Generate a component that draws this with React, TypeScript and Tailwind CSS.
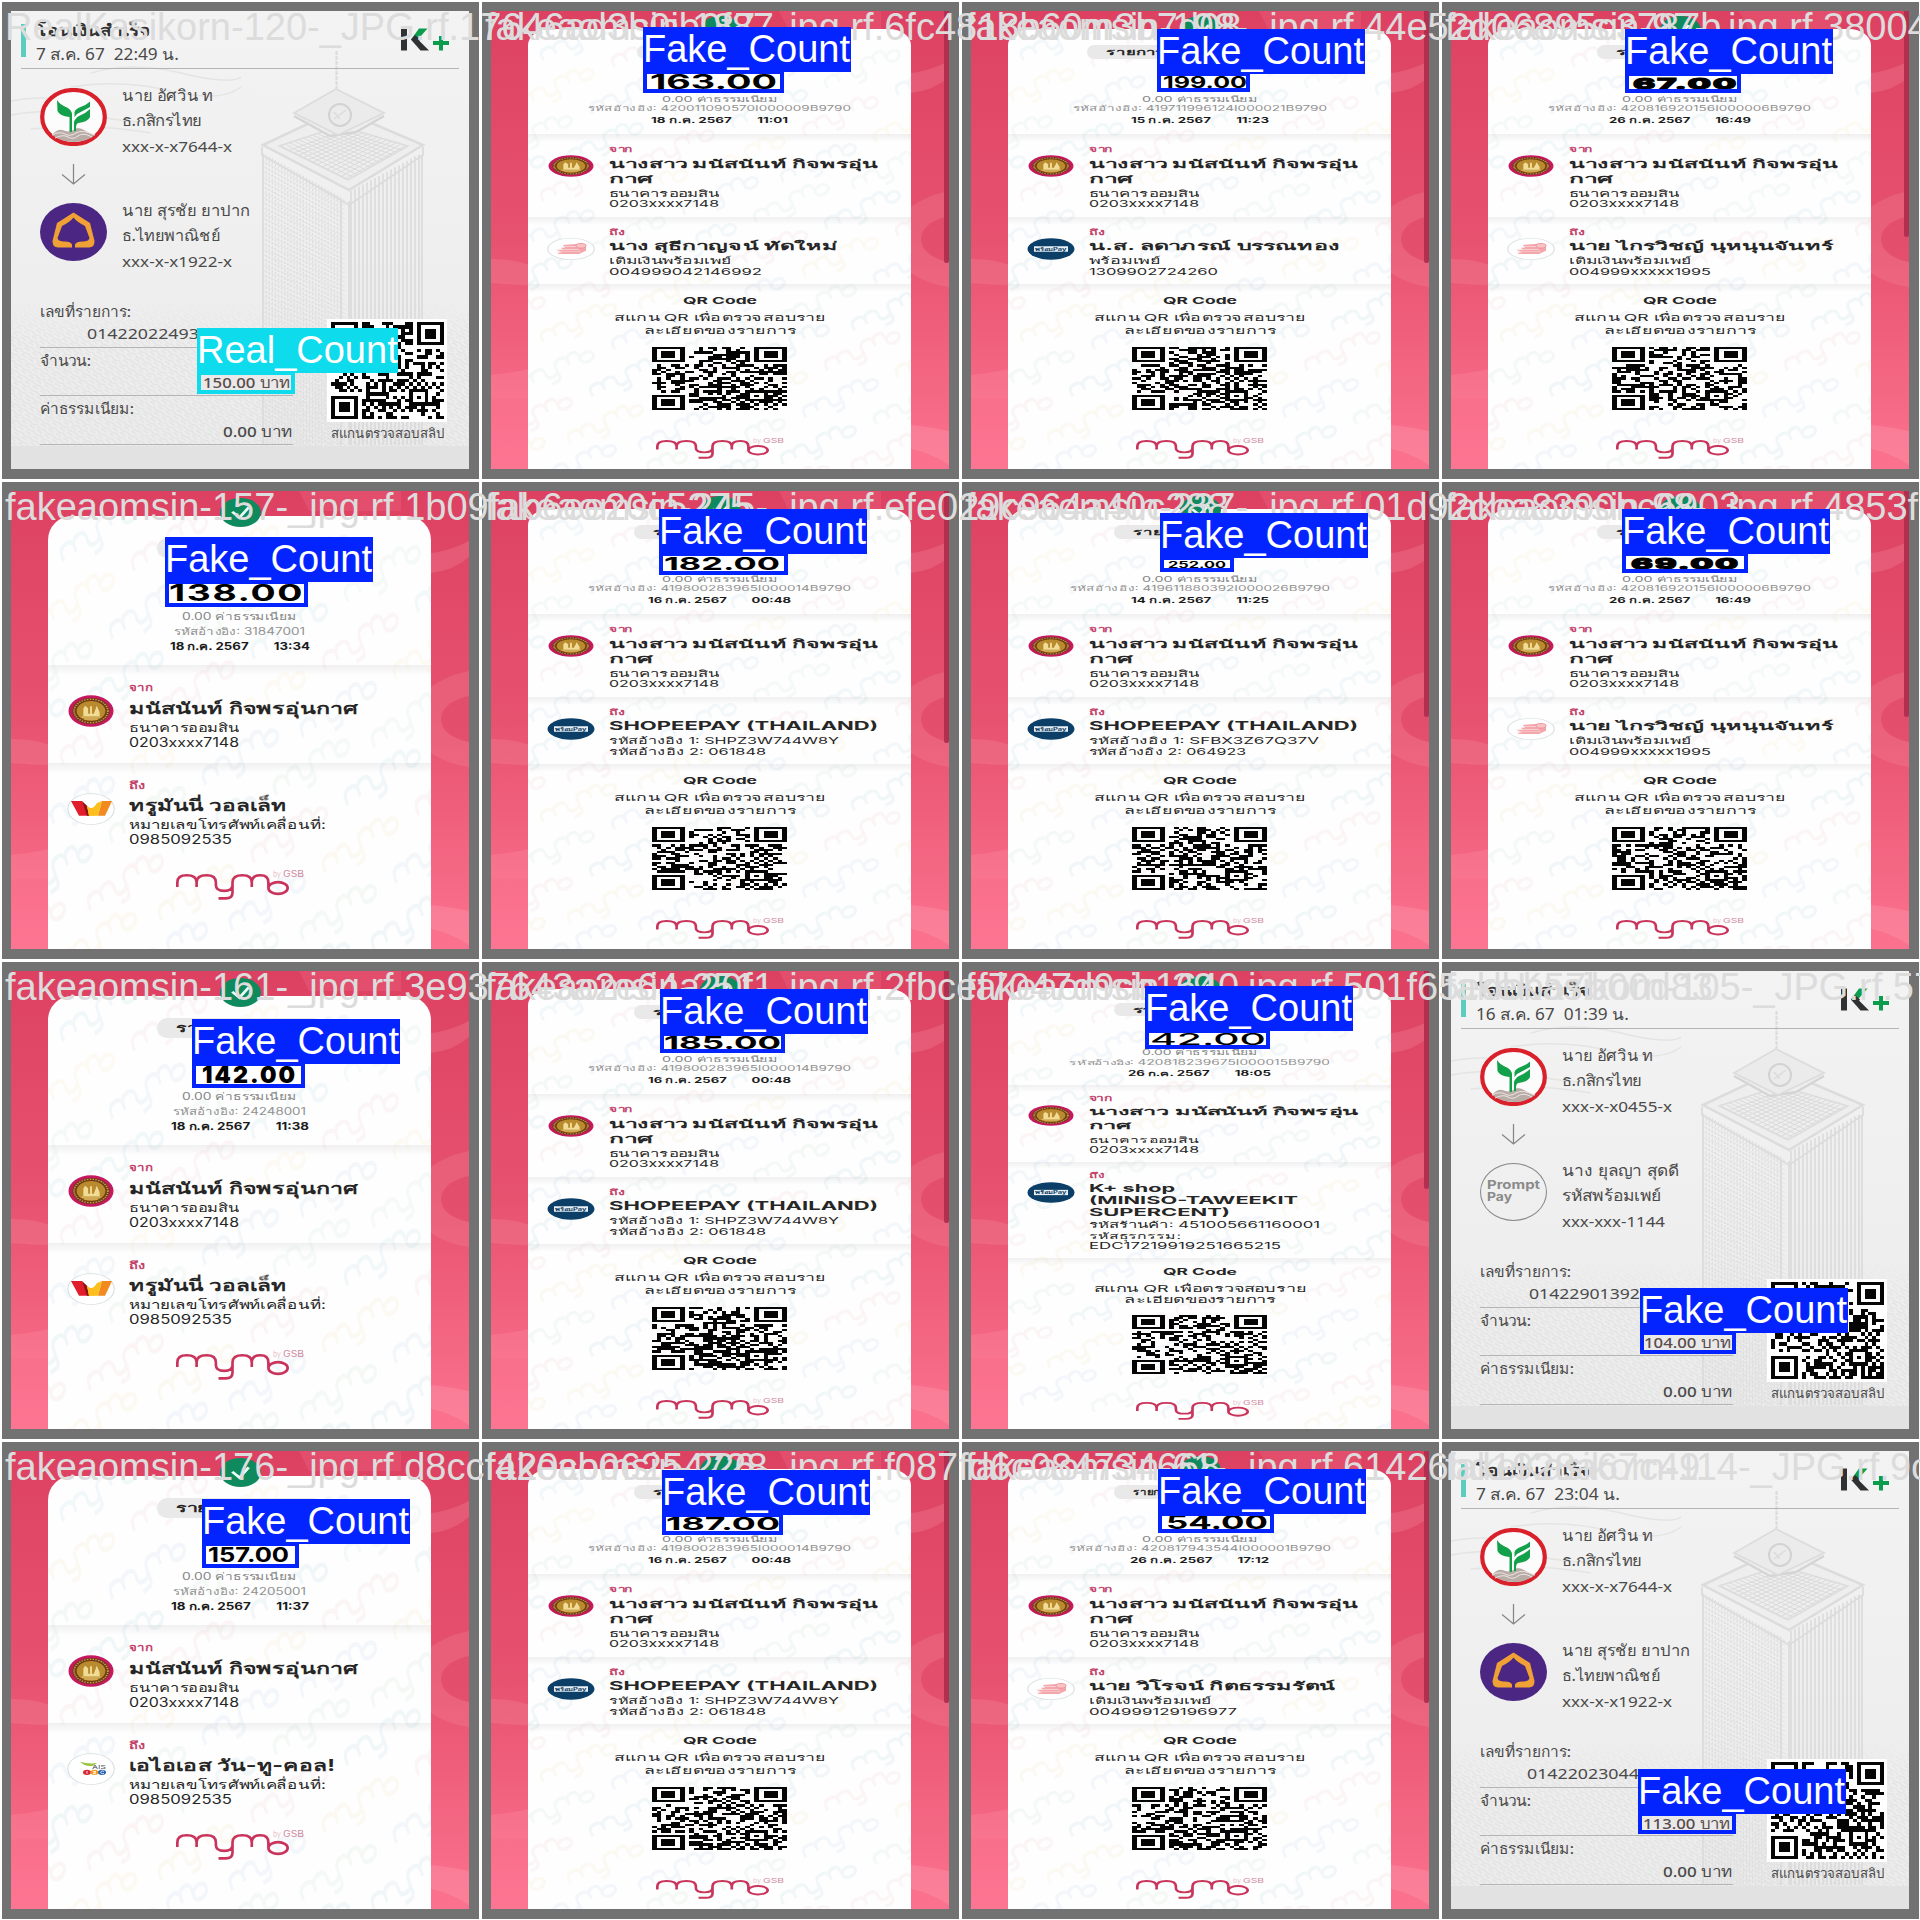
import { useLayoutEffect, useRef, type ReactNode } from "react";

/* Single line of text stretched horizontally to fill the width of its box. */
function Fit({ className = "", children }: { className?: string; children: ReactNode }) {
  const box = useRef<HTMLDivElement>(null);
  const txt = useRef<HTMLSpanElement>(null);
  useLayoutEffect(() => {
    if (!box.current || !txt.current) return;
    txt.current.style.transform = "none";
    const natural = txt.current.getBoundingClientRect().width;
    const target = box.current.getBoundingClientRect().width;
    if (natural > 0) txt.current.style.transform = `scaleX(${target / natural})`;
  });
  return (
    <div ref={box} className={`flex shrink-0 items-center whitespace-pre leading-none ${className}`}>
      <span ref={txt} className="inline-block shrink-0 origin-left">
        {children}
      </span>
    </div>
  );
}

/* ---------- QR ---------- */
function QR({ seed, className }: { seed: number; className: string }) {
  const n = 29;
  let s = seed * 7919 + 13;
  const rnd = () => {
    s = (s * 1103515245 + 12345) % 2147483648;
    return s / 2147483648;
  };
  const finder = (x: number, y: number) => {
    const d = Math.max(Math.abs(x - 3), Math.abs(y - 3));
    return d !== 2 && d < 4;
  };
  let d = "";
  for (let y = 0; y < n; y++) {
    for (let x = 0; x < n; x++) {
      let on = rnd() > 0.5;
      if (x > 15 && y > 12 && rnd() > 0.55) on = (x + y) % 2 === 0;
      if (x < 8 && y < 8) on = x < 7 && y < 7 && finder(x, y);
      else if (x > n - 9 && y < 8) on = x > n - 8 && y < 7 && finder(x - (n - 7), y);
      else if (x < 8 && y > n - 9) on = x < 7 && y > n - 8 && finder(x, y - (n - 7));
      else if (Math.abs(x - 22) < 3 && Math.abs(y - 22) < 3)
        on = Math.max(Math.abs(x - 22), Math.abs(y - 22)) !== 1;
      if (on) d += `M${x} ${y}h1v1h-1z`;
    }
  }
  return (
    <svg viewBox="0 0 29 29" preserveAspectRatio="none" shapeRendering="crispEdges" className={className}>
      <path d={d} fill="#050505" />
    </svg>
  );
}

/* ---------- MyMo brand strokes ---------- */
const MYMO =
  "M4 40V26Q4 4 32 4Q62 4 62 26V40M62 26Q62 4 92 4Q120 4 120 26V34Q120 52 145 52Q170 52 170 34V58Q170 75 150 75H128M170 34V26Q170 4 200 4Q228 4 228 26V40M228 26Q228 4 254 4Q278 4 278 26V40M278 43a29 18 0 1 0 58 0a29 18 0 1 0 -58 0";

function Watermark({ h }: { h: number }) {
  const tints = ["#8fc4d0", "#eab0bc", "#ecd79c", "#a3bedb", "#a9d3c0"];
  const items = [];
  for (let r = 0; r < 10; r++)
    for (let c = -1; c < 7; c++)
      items.push(
        <path
          key={`${r}_${c}`}
          d={MYMO}
          fill="none"
          stroke={tints[(r * 2 + c + 5) % 5]}
          strokeWidth={12}
          transform={`translate(${c * 71 - (r % 3) * 22 + 10} ${r * 47 + c * 7 + 22}) rotate(-27) scale(0.24 0.27)`}
        />,
      );
  return (
    <svg
      viewBox={`0 0 383 ${h}`}
      preserveAspectRatio="none"
      className="absolute inset-0 h-full w-full opacity-[0.11]"
    >
      {items}
    </svg>
  );
}

function Waves() {
  return (
    <svg viewBox="0 0 458 458" className="absolute inset-0 h-full w-full">
      <path d="M288 0q6 12 10 20H390V0z" fill="#ee6a86" opacity=".3" />
      <path d="M420 82q22-2 38-16V50q-20 10-38 12z" fill="#f58aa0" opacity=".3" />
      <path d="M458 180q-22 4-38 16v66q18 12 38 14z" fill="#f58aa0" opacity=".25" />
      <path d="M458 205q-26 6-28 22q0 18 28 24z" fill="#dd3f60" opacity=".55" />
      <path d="M0 248q24 0 38 6v20q-18 0-38-2z" fill="#f58aa0" opacity=".3" />
      <path d="M0 364q20-2 38-6v30H0z" fill="#ff8ea5" opacity=".3" />
      <path d="M0 388h38v70H0z" fill="#ff7c97" opacity=".35" />
      <path d="M420 414q20 2 38 6v34q-18-12-38-16z" fill="#ff9aae" opacity=".35" />
    </svg>
  );
}

/* ---------- Small round logos ---------- */
function GsbSeal({ className }: { className: string }) {
  return (
    <svg viewBox="0 0 48 48" preserveAspectRatio="none" className={className}>
      <circle cx="24" cy="24" r="23.5" fill="#c4195f" />
      <circle cx="24" cy="24" r="19.5" fill="#6d3a12" />
      <circle cx="24" cy="24" r="17.6" fill="none" stroke="#c59a4e" strokeWidth="2" strokeDasharray="1.6 1.4" />
      <circle cx="24" cy="24" r="15" fill="#b98a2e" />
      <path d="M16 32V20l2-4 3 4v8h2V17h2v11h2l3-12 3 10v6z" fill="#f1dc95" />
      <path d="M14 33h20M17 36h14" stroke="#e5c878" strokeWidth="1.6" />
    </svg>
  );
}

function DestLogo({ kind, className }: { kind: string; className: string }) {
  if (kind === "bank")
    return (
      <svg viewBox="0 0 48 48" preserveAspectRatio="none" className={className}>
        <circle cx="24" cy="24" r="23.5" fill="#0b3f68" />
        <rect x="7" y="18" width="34" height="12" fill="#e8f1f7" />
        <text x="24" y="28" textAnchor="middle" fontSize="10.5" fontWeight="700" textLength="31" lengthAdjust="spacingAndGlyphs" fill="#123f63" fontFamily="Inter, sans-serif">
          พร้อมPay
        </text>
      </svg>
    );
  return (
    <svg viewBox="0 0 48 48" preserveAspectRatio="none" className={className}>
      <circle cx="24" cy="24" r="23.2" fill="#fff" stroke="#d5dee1" strokeWidth="1.1" />
      {kind === "topup" && (
        <g>
          <path d="M16 15l19-3 4 3v13l-7 7H12l-2-3h5l-4-3h4l-6-3h7l-2-5h4z" fill="#f3a6ac" />
          <path d="M16 19h20M10 25h22M14 30h20" stroke="#fbdcdc" strokeWidth="1.5" />
          <circle cx="34" cy="17" r="5" fill="#f8c3c4" stroke="#e9878f" />
        </g>
      )}
      {kind === "true" && (
        <g>
          <path d="M4 12h11l7 22H12z" fill="#e11d2b" />
          <path d="M15 12l5 7 3 15h-3z" fill="#8c1117" />
          <path d="M20 19l8 15h-6z" fill="#ffd028" />
          <path d="M22 34l-2-15q5 9 10-4l5-3-4 22z" fill="#fbc01d" />
          <path d="M31 34l4-22h10l-7 22z" fill="#f28a1d" />
        </g>
      )}
      {kind === "ais" && (
        <g>
          <path d="M13 13q9 4 17 2l-4 4q-8 2-13-6z" fill="#9bc53d" />
          <text x="25" y="24" fontSize="8" textLength="14" lengthAdjust="spacingAndGlyphs" fill="#4b5563" fontFamily="Inter, sans-serif">AIS</text>
          <circle cx="20" cy="29" r="4" fill="#d62839" />
          <circle cx="27.500" cy="29" r="4" fill="#f39a1f" />
          <circle cx="35" cy="29" r="4" fill="#2563b0" />
          <path d="M20 27v4M26 28h3l-3 3h3M37 27.500a2 2 0 1 0 0 3" stroke="#fff" fill="none" strokeWidth="1" />
        </g>
      )}
    </svg>
  );
}

/* ---------- MyMo slip ---------- */
type Row = { t: string; w: string };
type Mymo = {
  type: "mymo";
  v: "A" | "B" | "C";
  pill?: string;
  pillW?: string;
  pillT?: string;
  ref_: Row;
  date: Row;
  logo: string;
  dest: Row[];
  subs: Row[];
  bar?: string;
  seed: number;
};

const V = {
  A: {
    card: "mt-[18px] rounded-t-[22px_16px]", h: 440,
    check: "top-[5px] h-[28px]",
    pill: "mt-[16px] h-[14px] text-[8.5px]", fee: "mt-[35px] h-[10px] text-[8px]", ref: "h-[10px] text-[7.5px]",
    date: "h-[14px] text-[7.5px]", div1: "mt-[6px] h-[8px]", from: "mt-[2px] h-[10px] text-[8px]",
    name: "h-[21px] text-[11.5px]", name2: "h-[9px] text-[11.5px]", bank: "mt-[4px] h-[10px] text-[9px]",
    acct: "h-[11px] text-[9.5px]", div2: "mt-[8px] h-[8px]", dest: "h-[19px] text-[11.5px]",
    subs: ["h-[9px] text-[9.5px]", "h-[13px] text-[9.5px]"], div3: "mt-[6px] h-[8px]",
    icon: "mt-[13px] h-[22px]",
    qt: "mt-[3px] h-[12px] text-[9.5px]", s1: "mt-[3px] h-[16px] text-[9.5px]", s2: "h-[9px] text-[9.5px]",
    qr: "mt-[12px] h-[63px]", logo: "mt-[30px] h-[19px]", gsb: "text-[6.5px] -top-[2px]",
  },
  B: {
    card: "mt-[25px] rounded-t-[24px_24px]", h: 300,
    check: "top-[7px] h-[29px]",
    pill: "mt-[22px] h-[20px] text-[11px]", fee: "mt-[52px] h-[12px] text-[10px]", ref: "h-[17px] text-[10px]",
    date: "h-[17px] text-[10.5px]", div1: "mt-[9px] h-[10px]", from: "mt-[6px] h-[12px] text-[10px]",
    name: "h-[29px] text-[16px]", name2: "hidden", bank: "mt-[1px] h-[10px] text-[12px]",
    acct: "h-[20px] text-[12.5px]", div2: "mt-[10px] h-[10px]", dest: "h-[28px] text-[16px]",
    subs: ["h-[13px] text-[12.5px]", "h-[17px] text-[12.5px]"], div3: "hidden",
    icon: "mt-[20px] h-[32px]",
    qt: "", s1: "", s2: "", qr: "", logo: "mt-[25px] h-[26px]", gsb: "text-[8.5px] -top-[4px]",
  },
  C: {
    card: "mt-[17px] rounded-t-[22px_15px]", h: 480,
    check: "top-[5px] h-[26px]",
    pill: "mt-[15px] h-[13px] text-[8px]", fee: "mt-[32px] h-[10px] text-[7.5px]", ref: "h-[8px] text-[7px]",
    date: "h-[14px] text-[7px]", div1: "mt-[5px] h-[7px]", from: "mt-[2px] h-[10px] text-[7.5px]",
    name: "h-[17px] text-[10.5px]", name2: "h-[11px] text-[10.5px]", bank: "mt-[3px] h-[10px] text-[8.5px]",
    acct: "h-[9px] text-[9px]", div2: "mt-[8px] h-[7px]", dest: "translate-y-[1.5px] h-[12px] text-[10.8px]",
    subs: ["h-[15px] text-[9px]", "h-[9px] text-[8.5px]", "h-[10px] text-[8.5px]"], div3: "mt-[7px] h-[7px]",
    icon: "mt-[13px] h-[21px]",
    qt: "mt-[1px] h-[10px] text-[9px]", s1: "mt-[5px] h-[14px] text-[9px]", s2: "h-[9px] text-[9px]",
    qr: "mt-[11px] h-[59px]", logo: "mt-[28px] h-[18px]", gsb: "text-[6px] -top-[2px]",
  },
};

function Divider({ className }: { className: string }) {
  return <div className={`w-full shrink-0 bg-linear-to-b from-[#f0f0f0] to-[#fefefe] ${className}`} />;
}

function MymoSlip({ s }: { s: Mymo }) {
  const v = V[s.v];
  const short = s.v === "B";
  return (
    <div className="relative flex h-full w-full overflow-hidden bg-linear-to-b from-[#dd4162] via-[#e7526f] to-[#fb728f] font-[Inter,'Noto_Sans',sans-serif]">
      <Waves />
      <div className={`relative ml-[37px] flex w-[383px] flex-col items-center overflow-hidden bg-[#fefefe] text-[#262626] ${v.card}`}>
        <Watermark h={v.h} />
        <div className={`relative flex shrink-0 items-center rounded-full bg-[#e9e9e9] font-semibold ${v.pill} ${s.pillW ?? "w-[166px]"}`}>
          {s.pill && <Fit className={`ml-[19px] ${s.pillT ?? "w-[128px]"}`}>{s.pill}</Fit>}
        </div>
        <Fit className={`relative w-[115px] text-[#858585] ${v.fee}`}>0.00 ค่าธรรมเนียม</Fit>
        <Fit className={`relative text-[#929292] ${v.ref} ${s.ref_.w}`}>{s.ref_.t}</Fit>
        <Fit className={`relative font-bold text-[#1b1b1b] ${v.date} ${s.date.w}`}>{s.date.t}</Fit>
        <Divider className={v.div1} />
        <div className="relative flex w-full shrink-0">
          <GsbSeal className={`ml-[20px] w-[46px] shrink-0 ${v.icon}`} />
          <div className="ml-[15px] flex flex-col">
            <Fit className={`w-[24px] font-semibold text-[#c2426a] ${v.from}`}>จาก</Fit>
            {short ? (
              <Fit className={`w-[229px] font-bold ${v.name}`}>มนัสนันท์ กิจพรอุ่นกาศ</Fit>
            ) : (
              <>
                <Fit className={`w-[269px] font-bold ${v.name}`}>นางสาว มนัสนันท์ กิจพรอุ่น</Fit>
                <Fit className={`w-[43px] font-bold ${v.name2}`}>กาศ</Fit>
              </>
            )}
            <Fit className={`w-[110px] ${v.bank}`}>ธนาคารออมสิน</Fit>
            <Fit className={`w-[110px] ${v.acct}`}>0203xxxx7148</Fit>
          </div>
        </div>
        <Divider className={v.div2} />
        <div className="relative flex w-full shrink-0">
          <DestLogo kind={s.logo} className={`ml-[19px] w-[48px] shrink-0 ${v.icon}`} />
          <div className="ml-[14px] flex flex-col">
            <Fit className={`w-[16px] font-semibold text-[#c2426a] ${v.from}`}>ถึง</Fit>
            {s.dest.map((d) => (
              <Fit key={d.t} className={`font-bold ${v.dest} ${d.w}`}>{d.t}</Fit>
            ))}
            {s.subs.map((d, i) => (
              <Fit key={d.t} className={`${v.subs[i]} ${d.w}`}>{d.t}</Fit>
            ))}
          </div>
        </div>
        {!short && (
          <>
            <Divider className={v.div3} />
            <Fit className={`relative w-[74px] font-bold ${v.qt}`}>QR Code</Fit>
            <Fit className={`relative w-[212px] ${v.s1}`}>สแกน QR เพื่อตรวจสอบราย</Fit>
            <Fit className={`relative w-[152px] ${v.s2}`}>ละเอียดของรายการ</Fit>
            <QR seed={s.seed} className={`relative w-[135px] shrink-0 ${v.qr}`} />
          </>
        )}
        <div className={`relative mr-[15px] w-[113px] shrink-0 ${v.logo}`}>
          <svg viewBox="0 0 340 80" preserveAspectRatio="none" className="h-full w-full">
            <path d={MYMO} fill="none" stroke="#c9345c" strokeWidth="8" />
          </svg>
          <div className={`absolute left-[97px] flex leading-none text-[#cf8ba0] ${v.gsb}`}>
            <Fit className="w-[8px] opacity-50">by</Fit>
            <Fit className="ml-[2px] w-[21px]">GSB</Fit>
          </div>
        </div>
      </div>
      <svg viewBox="0 0 40 40" preserveAspectRatio="none" className={`absolute left-[209px] w-[41px] ${v.check}`}>
        <circle cx="20" cy="20" r="20" fill="#0f8a5f" />
        <path d="M12 19l7 8 9-14" fill="none" stroke="#e9fff6" strokeWidth="3" />
      </svg>
      {s.bar && <div className={`absolute right-0 top-0 w-[5px] rounded-b bg-[#b42f4f] ${s.bar}`} />}
    </div>
  );
}

/* ---------- Kasikorn slip ---------- */
type Kplus = {
  type: "kplus";
  date: Row;
  acct: string;
  prompt?: boolean;
  to: Row[];
  no: Row;
  noM: string;
  seed: number;
};

function Tower() {
  const left = [];
  for (let i = 0; i < 26; i++) left.push(`M${252 + i * 3.1} ${142 + i * 1.75}V434`);
  const right = [];
  for (let i = 0; i < 18; i++) right.push(`M${340 + i * 4} ${180 - i * 2.15}V434`);
  const rows = [];
  for (let i = 0; i < 56; i++) rows.push(`M252 ${145 + i * 5.2}L334 ${190 + i * 4.5}`);
  const roof = [];
  for (let i = 0; i < 13; i++) {
    roof.push(`M${270 + i * 4.6} ${135 - i * 1.5}L${336 + i * 4.6} ${168 - i * 2.4}`);
    roof.push(`M${394 - i * 4.6} ${135 - i * 1.5}L${334 - i * 4.6} ${168 - i * 2.4}`);
  }
  return (
    <svg viewBox="0 0 458 458" className="absolute inset-0 h-full w-full">
      <defs>
        <pattern id="ground" width="9" height="7" patternUnits="userSpaceOnUse" patternTransform="rotate(32)">
          <path d="M0 2q3 2 6 0t3 1M1 5.500q3-1 6 .5" stroke="#dedede" strokeWidth=".9" fill="none" />
        </pattern>
        <linearGradient id="fade" x1="0" y1="0" x2="0" y2="1">
          <stop offset="0" stopColor="#eeeeee" />
          <stop offset=".3" stopColor="#eeeeee" stopOpacity="0" />
        </linearGradient>
      </defs>
      <rect y="290" width="458" height="145" fill="url(#ground)" />
      <rect y="285" width="458" height="150" fill="url(#fade)" />
      <path d="M80 62q40-12 90 0t60 4M60 76q50-8 100 4t70-4M0 104q40-8 90 2t80 0M20 118q60-6 120 4M0 90q30-6 60 0" stroke="#e4e4e4" strokeWidth="1.500" fill="none" />
      <g fill="none" stroke="#dcdcdc">
        <path d={left.join("")} strokeWidth="1.300" strokeDasharray="2.500 1.500" stroke="#dedede" />
        <path d={rows.join("")} strokeWidth=".9" stroke="#e2e2e2" />
        <path d={right.join("")} strokeWidth="1.400" stroke="#d7d7d7" />
        <path d="M325.500 40v38" strokeWidth="2.200" strokeDasharray="4 1" />
        <path d="M252 134l76-36 84 36-74 45z" strokeWidth="2.500" fill="#eeeeee" />
        <path d={roof.join("")} strokeWidth=".9" stroke="#d8d8d8" />
        <path d="M268 135l61-20 68 20-60 34z" strokeWidth="1.500" />
        <path d="M283 105l36 20 26-4 28-16" strokeWidth="2.500" stroke="#d5d5d5" fill="#eeeeee" />
        <path d="M283 102l42-24 48 24-46 22z" strokeWidth="1.800" fill="#ebebeb" />
        <circle cx="329" cy="104" r="11" strokeWidth="2" stroke="#d2d2d2" />
        <path d="M323 108l12-9M323 101l6 7" strokeWidth="1.500" />
        <path d="M251 136v8l87 50 74-50v-8M252 144v290M338 190v244M411 144v290M330 190v244" strokeWidth="1.800" />
      </g>
    </svg>
  );
}

function KplusSlip({ s }: { s: Kplus }) {
  return (
    <div className="relative flex h-full w-full flex-col overflow-hidden bg-linear-to-b from-[#f3f3f3] to-[#ebebeb] pl-[10px] font-['Noto_Sans',sans-serif] text-[#4a4a4a]">
      <Tower />
      <div className="absolute inset-x-0 bottom-0 h-[23px] bg-[#e2e2e2]" />
      <div className="relative flex h-[58px] w-[438px] shrink-0 border-b border-[#b5b5b5]">
        <div className="mt-[13px] h-[33px] w-[5px] bg-[#5ccdbd]" />
        <div className="ml-[10px] flex flex-col">
          <Fit className="mt-[10px] h-[18px] w-[114px] text-[16px] font-semibold text-[#333]">โอนเงินสำเร็จ</Fit>
          <Fit className={`mt-[7px] h-[17px] text-[15.5px] ${s.date.w}`}>{s.date.t}</Fit>
        </div>
        <svg viewBox="0 0 48 24" className="ml-auto mr-[10px] mt-[17px] h-[24px] w-[48px]">
          <path d="M0 .5h6v22H0z" fill="#2f3133" />
          <path d="M10 11.500h7l11 11h-8.500z" fill="#2f3133" />
          <path d="M10 11.500L18 0.500h8.500L16 12.500z" fill="#0c9d4c" />
          <path d="M14 7l5 4.500-4 5-5-5z" fill="#2f3133" />
          <path d="M32 15h16M40 8v14.500" stroke="#0c9d4c" strokeWidth="4" />
        </svg>
      </div>
      <div className="relative mt-[19px] flex shrink-0">
        <svg viewBox="0 0 67 58" className="ml-[19px] h-[58px] w-[67px]">
          <ellipse cx="33.500" cy="29" rx="31.300" ry="27" fill="#fcfcfc" stroke="#d9202b" strokeWidth="4.200" />
          <path d="M12 47q6-7 12-4.500t10-1 11 1 10 4.500q-8 7-21 7t-22-7z" fill="#b9aca6" />
          <path d="M12 47q8-4 13-1t11-1 19 2M15 50q8-4 13-1t10-1 14 1" stroke="#ece6e3" fill="none" />
          <path d="M17 12q3 5 10 7.500 4 2 5 6V44h-2.500V29q-10-1-12-6z" fill="#13a04a" />
          <path d="M50 13.500V19l-13 7-2.500 3v-5q1-3 6-5 6-2 9.500-5.500z" fill="#13a04a" />
          <path d="M50 21v8q-2 5-12 6-2 1-2 4v4h-2V34q1-4 6-6.500 6-2.500 10-6.500z" fill="#13a04a" />
        </svg>
        <div className="ml-[15px] flex flex-col">
          <Fit className="-mt-[1px] h-[18px] w-[91px] text-[15.5px] font-medium">นาย อัศวิน ท</Fit>
          <Fit className="mt-[7px] h-[18px] w-[80px] text-[15.5px]">ธ.กสิกรไทย</Fit>
          <Fit className="mt-[7px] h-[18px] w-[110px] text-[14.5px]">{s.acct}</Fit>
        </div>
      </div>
      <svg viewBox="0 0 24 20" className="relative ml-[40px] mt-[9px] h-[21px] w-[25px] shrink-0">
        <path d="M12 0v19M1 10l11 9 11-9" fill="none" stroke="#858585" strokeWidth="1.200" />
      </svg>
      <div className="relative mt-[18px] flex shrink-0">
        {s.prompt ? (
          <div className="ml-[19px] flex h-[58px] w-[67px] flex-col rounded-[50%] border-[1.5px] border-[#868686] pl-[6px] pt-[15px] font-[Inter,sans-serif] text-[12px] font-bold text-[#8a8a8a]">
            <Fit className="h-[12px] w-[53px]">Prompt</Fit>
            <Fit className="h-[12px] w-[25px]">Pay</Fit>
          </div>
        ) : (
          <svg viewBox="0 0 67 58" className="ml-[19px] h-[58px] w-[67px]">
            <ellipse cx="33.500" cy="29" rx="33.500" ry="29" fill="#4b2683" />
            <path d="M33.500 9.500L50 20 54.500 38Q54.500 44.500 49 44.500H18Q12.500 44.500 12.500 38L17 20z" fill="#f0a136" />
            <path d="M33.500 14.500Q37 19 45 23L49.500 35Q49 38 44 38.500 36.500 38 35 41.500V45.500H32V41.500Q30.500 38 23 38.500 18 38 17.500 35L22 23Q30 19 33.500 14.500z" fill="#4b2683" />
          </svg>
        )}
        <div className="ml-[15px] flex flex-col">
          <Fit className={`-mt-[1px] h-[18px] text-[15.5px] font-medium ${s.to[0].w}`}>{s.to[0].t}</Fit>
          <Fit className={`mt-[7px] h-[18px] text-[15.5px] ${s.to[1].w}`}>{s.to[1].t}</Fit>
          <Fit className={`mt-[7px] h-[18px] text-[14.5px] ${s.to[2].w}`}>{s.to[2].t}</Fit>
        </div>
      </div>
      <div className="relative ml-[19px] mt-[31px] flex">
        <div className="flex w-[253px] flex-col">
          <Fit className="h-[20px] w-[91px] text-[15px] font-medium">เลขที่รายการ:</Fit>
          <Fit className={`mt-[3px] h-[20px] text-[14px] ${s.noM} ${s.no.w}`}>{s.no.t}</Fit>
          <div className="mt-[3px] h-px bg-[#b5b5b5]" />
          <Fit className="mt-[3px] h-[18px] w-[51px] text-[15px] font-medium">จำนวน:</Fit>
          <div className="mt-[26px] h-px bg-[#b5b5b5]" />
          <Fit className="mt-[3px] h-[18px] w-[94px] text-[15px] font-medium">ค่าธรรมเนียม:</Fit>
          <Fit className="ml-auto mt-[4px] h-[20px] w-[70px] text-[14.5px] font-medium">0.00 บาท</Fit>
          <div className="mt-[3px] h-px bg-[#b5b5b5]" />
        </div>
        <div className="ml-[34px] mt-[18px] flex flex-col items-center">
          <div className="flex h-[103px] w-[120px] items-center justify-center bg-white">
            <QR seed={s.seed} className="h-[97px] w-[113px]" />
          </div>
          <Fit className="mt-[3px] h-[16px] w-[113px] text-[13px]">สแกนตรวจสอบสลิป</Fit>
        </div>
      </div>
    </div>
  );
}

/* ---------- Data ---------- */
type Tag = { label: string; tone: string; pos: string; box: string; amount: string; text: string };
type Tile = { file: string; slip: Mymo | Kplus; tag: Tag };

const BLUE = "bg-[#0424ff] border-[#0424ff]";
const CYAN = "bg-[#0edbec] border-[#0edbec]";
const to = (t: string, w: string): Row => ({ t, w });
const day = (d: string, t: string, w: string): Row => ({ t: `${d}        ${t}`, w });
const fake = (pos: string, box: string, amount: string, text: string): Tag => ({ label: "Fake_Count", tone: BLUE, pos, box, amount, text });

const shopee = (a: string, b: string) => ({
  logo: "bank",
  dest: [to("SHOPEEPAY (THAILAND)", "w-[269px]")],
  subs: [to(`รหัสอ้างอิง 1: ${a}`, "w-[230px]"), to(`รหัสอ้างอิง 2: ${b}`, "w-[157px]")],
});
const phone = [to("หมายเลขโทรศัพท์เคลื่อนที่:", "w-[197px]"), to("0985092535", "w-[103px]")];

const tiles: Tile[] = [
  {
    file: "RealKasikorn-120-_JPG.rf.17646ad3b0jb0f87",
    slip: { type: "kplus", date: to("7 ส.ค. 67  22:49 น.", "w-[143px]"), acct: "xxx-x-x7644-x", to: [to("นาย สุรชัย ยาปาก", "w-[128px]"), to("ธ.ไทยพาณิชย์", "w-[98px]"), to("xxx-x-x1922-x", "w-[110px]")], no: to("014220224930", "w-[122px]"), noM: "ml-[47px]", seed: 3 },
    tag: { label: "Real_Count", tone: CYAN, pos: "left-[197px] top-[328px]", box: "h-[23px] w-[98px]", amount: "150.00 บาท", text: "w-[88px] ml-[2px] text-[14.5px] font-medium text-[#5b4b4b] font-['Noto_Sans',sans-serif]" },
  },
  {
    file: "fakeaomsin-187-_jpg.rf.6fc4818b60m3b7d08",
    slip: { type: "mymo", v: "A", ref_: to("รหัสอ้างอิง: 420011090570I000009B9790", "w-[263px]"), date: day("18 ก.ค. 2567", "11:01", "w-[137px]"), logo: "topup", dest: [to("นาง สุธีกาญจน์ ทัดใหม่", "w-[229px]")], subs: [to("เติมเงินพร้อมเพย์", "w-[123px]"), to("004999042146992", "w-[153px]")], bar: "h-[252px]", seed: 11 },
    tag: fake("left-[163px] top-[27px]", "h-[23px] w-[141px]", "163.00", "w-[127px] ml-[3px] text-[20px] font-bold"),
  },
  {
    file: "fakeaomsin-198-_jpg.rf.44e52d06895c3787b",
    slip: { type: "mymo", v: "A", pill: "รายการโอนเงินพร้อมเพย์", pillW: "w-[226px]", pillT: "w-[188px]", ref_: to("รหัสอ้างอิง: 419711996124I000021B9790", "w-[254px]"), date: day("15 ก.ค. 2567", "11:23", "w-[138px]"), logo: "bank", dest: [to("น.ส. ลดาภรณ์ บรรณทอง", "w-[251px]")], subs: [to("พร้อมเพย์", "w-[72px]"), to("1309902724260", "w-[129px]")], bar: "h-[252px]", seed: 12 },
    tag: fake("left-[197px] top-[29px]", "h-[20px] w-[93px]", "199.00", "w-[84px] ml-[2px] pt-[1px] text-[15.5px] font-bold"),
  },
  {
    file: "fakeaomsin-97-_jpg.rf.38004a6e1f7b2",
    slip: { type: "mymo", v: "A", pill: "รายการเติมเงิน", ref_: to("รหัสอ้างอิง: 420816920156I000006B9790", "w-[263px]"), date: day("26 ก.ค. 2567", "16:49", "w-[142px]"), logo: "topup", dest: [to("นาย ไกรวิชญ์ นุหนุนจันทร์", "w-[264px]")], subs: [to("เติมเงินพร้อมเพย์", "w-[123px]"), to("004999xxxxx1995", "w-[142px]")], bar: "h-[226px]", seed: 13 },
    tag: fake("left-[185px] top-[29px]", "h-[21px] w-[116px]", "67.00", "w-[105px] ml-[4px] pt-[2px] text-[15px] font-black tracking-[0.8px] [-webkit-text-stroke:0.8px_#000]"),
  },
  {
    file: "fakeaomsin-157-_jpg.rf.1b09fab6ee20c5275",
    slip: { type: "mymo", v: "B", ref_: to("รหัสอ้างอิง: 31847001", "w-[131px]"), date: day("18 ก.ค. 2567", "13:34", "w-[140px]"), logo: "true", dest: [to("ทรูมันนี่ วอลเล็ท", "w-[158px]")], subs: phone, seed: 1 },
    tag: fake("left-[165px] top-[57px]", "h-[27px] w-[143px]", "138.00", "w-[135px] text-[23px] font-bold tracking-[1px]"),
  },
  {
    file: "fakeaomsin-245-_jpg.rf.efe029c964a40c288",
    slip: { type: "mymo", v: "A", pill: "รายการชำระเงิน", pillW: "w-[172px]", ref_: to("รหัสอ้างอิง: 419800283965I000014B9790", "w-[263px]"), date: day("16 ก.ค. 2567", "00:48", "w-[143px]"), ...shopee("SHPZ3W744W8Y", "061848"), bar: "h-[252px]", seed: 14 },
    tag: fake("left-[179px] top-[29px]", "h-[23px] w-[129px]", "182.00", "w-[116px] ml-[1px] text-[18px] font-bold"),
  },
  {
    file: "fakeaomsin-237-_jpg.rf.01d92cba8390bc6903",
    slip: { type: "mymo", v: "A", pill: "รายการชำระเงิน", pillW: "w-[172px]", ref_: to("รหัสอ้างอิง: 419611880392I000026B9790", "w-[260px]"), date: day("14 ก.ค. 2567", "11:25", "w-[138px]"), ...shopee("SFBX3Z67Q37V", "064923"), bar: "h-[226px]", seed: 15 },
    tag: fake("left-[200px] top-[33px]", "h-[16px] w-[74px]", "252.00", "w-[58px] ml-[4px] text-[9px] font-bold"),
  },
  {
    file: "fakeaomsin-98-_jpg.rf.4853f17c0a2be",
    slip: { type: "mymo", v: "A", pill: "รายการเติมเงิน", ref_: to("รหัสอ้างอิง: 420816920156I000006B9790", "w-[263px]"), date: day("26 ก.ค. 2567", "16:49", "w-[142px]"), logo: "topup", dest: [to("นาย ไกรวิชญ์ นุหนุนจันทร์", "w-[264px]")], subs: [to("เติมเงินพร้อมเพย์", "w-[123px]"), to("004999xxxxx1995", "w-[142px]")], bar: "h-[226px]", seed: 16 },
    tag: fake("left-[182px] top-[29px]", "h-[21px] w-[126px]", "69.00", "w-[109px] ml-[5px] pt-[2px] text-[15px] font-black tracking-[0.8px] [-webkit-text-stroke:0.8px_#000]"),
  },
  {
    file: "fakeaomsin-161-_jpg.rf.3e937643a2e64a20f1",
    slip: { type: "mymo", v: "B", pill: "รายการเติมเงิน", ref_: to("รหัสอ้างอิง: 24248001", "w-[133px]"), date: day("18 ก.ค. 2567", "11:38", "w-[138px]"), logo: "true", dest: [to("ทรูมันนี่ วอลเล็ท", "w-[158px]")], subs: phone, seed: 1 },
    tag: fake("left-[192px] top-[59px]", "h-[26px] w-[113px]", "142.00", "w-[95px] ml-[6px] text-[23px] font-black tracking-[2px]"),
  },
  {
    file: "fakeaomsin-251-_jpg.rf.2fbcef7047d9cb1640",
    slip: { type: "mymo", v: "A", pill: "รายการชำระเงิน", pillW: "w-[172px]", ref_: to("รหัสอ้างอิง: 419800283965I000014B9790", "w-[263px]"), date: day("16 ก.ค. 2567", "00:48", "w-[143px]"), ...shopee("SHPZ3W744W8Y", "061848"), bar: "h-[252px]", seed: 17 },
    tag: fake("left-[180px] top-[29px]", "h-[21px] w-[125px]", "185.00", "w-[117px] pt-[1px] text-[17.5px] font-bold"),
  },
  {
    file: "fakeaomsin-39-_jpg.rf.501f65edbb57b00d83",
    slip: {
      type: "mymo", v: "C", pill: "รายการชำระเงิน", pillW: "w-[172px]", ref_: to("รหัสอ้างอิง: 420818239675I000015B9790", "w-[261px]"), date: day("26 ก.ค. 2567", "18:05", "w-[143px]"), logo: "bank",
      dest: [to("K+ shop", "w-[86px]"), to("(MINISO-TAWEEKIT", "w-[209px]"), to("SUPERCENT)", "w-[141px]")],
      subs: [to("รหัสร้านค้า: 451005661160001", "w-[231px]"), to("รหัสธุรกรรม:", "w-[92px]"), to("EDC17219919251665215", "w-[192px]")],
      bar: "h-[218px]", seed: 18,
    },
    tag: fake("left-[185px] top-[26px]", "h-[20px] w-[125px]", "42.00", "w-[116px] ml-[1px] pt-[1px] text-[15.5px] font-medium"),
  },
  {
    file: "fakeKasikorn-105-_JPG.rf.579ec01a4b6d3",
    slip: { type: "kplus", date: to("16 ส.ค. 67  01:39 น.", "w-[153px]"), acct: "xxx-x-x0455-x", prompt: true, to: [to("นาง ยุลญา สุดดี", "w-[117px]"), to("รหัสพร้อมเพย์", "w-[99px]"), to("xxx-xxx-1144", "w-[103px]")], no: to("014229013920", "w-[121px]"), noM: "ml-[49px]", seed: 5 },
    tag: fake("left-[200px] top-[328px]", "h-[23px] w-[96px]", "104.00 บาท", "w-[88px] text-[14.5px] font-medium text-[#5b4b4b] font-['Noto_Sans',sans-serif]"),
  },
  {
    file: "fakeaomsin-176-_jpg.rf.d8ccf420cb06254728",
    slip: { type: "mymo", v: "B", pill: "รายการเติมเงิน", ref_: to("รหัสอ้างอิง: 24205001", "w-[133px]"), date: day("18 ก.ค. 2567", "11:37", "w-[138px]"), logo: "ais", dest: [to("เอไอเอส วัน-ทู-คอล!", "w-[206px]")], subs: phone, seed: 1 },
    tag: fake("left-[202px] top-[59px]", "h-[26px] w-[97px]", "157.00", "w-[81px] ml-[2px] text-[20px] font-bold"),
  },
  {
    file: "fakeaomsin-226-_jpg.rf.f087fd6c084734668",
    slip: { type: "mymo", v: "A", pill: "รายการชำระเงิน", pillW: "w-[172px]", ref_: to("รหัสอ้างอิง: 419800283965I000014B9790", "w-[263px]"), date: day("16 ก.ค. 2567", "00:48", "w-[143px]"), ...shopee("SHPZ3W744W8Y", "061848"), bar: "h-[252px]", seed: 19 },
    tag: fake("left-[182px] top-[30px]", "h-[22px] w-[121px]", "187.00", "w-[114px] text-[18px] font-bold"),
  },
  {
    file: "fakeaomsin-61-_jpg.rf.61426bd1928a67c49",
    slip: { type: "mymo", v: "A", pill: "รายการเติมเงินพร้อมเพย์", pillW: "w-[172px]", ref_: to("รหัสอ้างอิง: 420817943544I000001B9790", "w-[262px]"), date: day("26 ก.ค. 2567", "17:12", "w-[139px]"), logo: "topup", dest: [to("นาย วิโรจน์ กิตธรรมรัตน์", "w-[246px]")], subs: [to("เติมเงินพร้อมเพย์", "w-[123px]"), to("004999129196977", "w-[148px]")], bar: "h-[252px]", seed: 20 },
    tag: fake("left-[198px] top-[29px]", "h-[21px] w-[116px]", "54.00", "w-[102px] ml-[4px] text-[19px] font-bold"),
  },
  {
    file: "fakeKasikorn-114-_JPG.rf.9c07e2d15a8b",
    slip: { type: "kplus", date: to("7 ส.ค. 67  23:04 น.", "w-[144px]"), acct: "xxx-x-x7644-x", to: [to("นาย สุรชัย ยาปาก", "w-[128px]"), to("ธ.ไทยพาณิชย์", "w-[98px]"), to("xxx-x-x1922-x", "w-[110px]")], no: to("014220230440", "w-[122px]"), noM: "ml-[47px]", seed: 7 },
    tag: fake("left-[198px] top-[329px]", "h-[22px] w-[98px]", "113.00 บาท", "w-[88px] ml-[1px] text-[14.5px] font-medium text-[#5b4b4b] font-['Noto_Sans',sans-serif]"),
  },
];

function Annotation({ tile }: { tile: Tile }) {
  const t = tile.tag;
  const amountBg = tile.slip.type === "kplus" ? "bg-[#e9e9e9]" : "bg-white";
  return (
    <div className="relative h-[480px] w-[480px]">
      <div className="absolute left-[5px] top-[6px] whitespace-nowrap text-[38px] leading-[43px] text-[#dcdcdc]">{tile.file}</div>
      <div className={`absolute flex flex-col items-start ${t.pos}`}>
        <div className={`relative z-10 h-[45px] whitespace-nowrap text-[38px] leading-[45px] text-white ${t.tone} ${t.label === "Fake_Count" ? "w-[208px]" : "w-[201px]"}`}>
          {t.label}
        </div>
        <div className={`-mt-[2px] border-4 ${t.tone} ${t.box} box-border`}>
          <div className={`flex h-full w-full items-center overflow-hidden text-black ${amountBg}`}>
            <Fit className={`${t.text} ${tile.slip.type === "mymo" ? "font-[Inter,sans-serif]" : ""}`}>{t.amount}</Fit>
          </div>
        </div>
      </div>
    </div>
  );
}

export default function App() {
  return (
    <div className="relative h-[1920px] w-[1920px] overflow-hidden bg-white font-['Liberation_Sans',Arial,sans-serif]">
      <div className="grid grid-cols-4">
        {tiles.map((t, i) => (
          <div key={i} className="h-[480px] w-[480px] pb-px pl-[2px] pr-px pt-[2px]">
            <div className="h-[477px] w-[477px] bg-[#727272] pb-[10px] pl-[9px] pr-[10px] pt-[9px]">
              {t.slip.type === "kplus" ? <KplusSlip s={t.slip} /> : <MymoSlip s={t.slip} />}
            </div>
          </div>
        ))}
      </div>
      <div className="absolute inset-0 grid grid-cols-4">
        {tiles.map((t, i) => (
          <Annotation key={i} tile={t} />
        ))}
      </div>
    </div>
  );
}
